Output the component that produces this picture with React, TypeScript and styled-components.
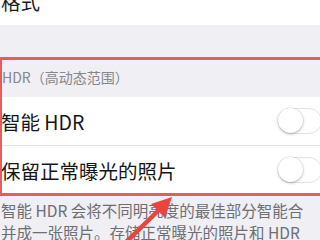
import React from "react";
import styled, { createGlobalStyle } from "styled-components";

const GlobalStyle = createGlobalStyle`
  html, body {
    margin: 0;
    padding: 0;
    background: #efeff4;
  }
  body {
    font-family: "Noto Sans CJK SC", "Noto Sans", sans-serif;
  }
`;

const Screen = styled.div`
  position: relative;
  width: 320px;
  height: 240px;
  overflow: hidden;
  background: #efeff4;
`;

const TopCell = styled.div`
  height: 25px;
  background: #ffffff;
  overflow: hidden;
  padding-left: 1px;
  font-size: 19.5px;
  line-height: 20px;
  color: #1c1c1e;
  span {
    display: block;
    margin-top: -8px;
  }
`;

const SectionHeader = styled.div`
  padding: 44px 0 12px 2px;
  font-size: 14px;
  line-height: 16px;
  color: #86868b;
  white-space: nowrap;
`;

const Group = styled.div`
  background: #ffffff;
`;

const Row = styled.div<{ $last?: boolean }>`
  display: flex;
  align-items: center;
  justify-content: space-between;
  height: 48px;
  padding-left: 1px;
  border-bottom: ${(p) => (p.$last ? "none" : "1px solid #e4e4e8")};
  font-size: 19.5px;
  color: #161616;
  white-space: nowrap;
`;

const Toggle = styled.div`
  position: relative;
  flex: none;
  width: 44px;
  height: 26px;
  margin-right: -2px;
  border-radius: 13px;
  border: 1.5px solid #e3e3e6;
  box-sizing: border-box;
  background: #ffffff;
  &::after {
    content: "";
    position: absolute;
    left: -1px;
    top: -1px;
    width: 25px;
    height: 25px;
    border-radius: 50%;
    background: #ffffff;
    box-shadow: 0 1px 3px rgba(0, 0, 0, 0.28), 0 0 0 0.5px rgba(0, 0, 0, 0.08);
  }
`;

const Footer = styled.div`
  padding: 5px 0 0 1px;
  font-size: 15.5px;
  line-height: 22px;
  color: #6e6e73;
  white-space: nowrap;
`;

const Highlight = styled.div`
  position: absolute;
  left: -1px;
  top: 57px;
  width: 330px;
  height: 139px;
  box-sizing: border-box;
  border: 3px solid #e85c5b;
  pointer-events: none;
`;

const Arrow = styled.svg`
  position: absolute;
  left: 0;
  top: 0;
  pointer-events: none;
`;

export default function App() {
  return (
    <>
      <GlobalStyle />
      <Screen>
        <TopCell>
          <span>格式</span>
        </TopCell>
        <SectionHeader>HDR（高动态范围）</SectionHeader>
        <Group>
          <Row>
            <span>智能 HDR</span>
            <Toggle />
          </Row>
          <Row $last>
            <span>保留正常曝光的照片</span>
            <Toggle />
          </Row>
        </Group>
        <Footer>
          智能 HDR 会将不同明亮度的最佳部分智能合
          <br />
          并成一张照片。存储正常曝光的照片和 HDR
        </Footer>
        <Highlight />
        <Arrow width="320" height="240" viewBox="0 0 320 240">
          <line x1="122" y1="246" x2="161" y2="208" stroke="#e8453e" strokeWidth="4.5" strokeLinecap="round" />
          <polygon points="172,197 151,204 165,218" fill="#e8453e" />
        </Arrow>
      </Screen>
    </>
  );
}
